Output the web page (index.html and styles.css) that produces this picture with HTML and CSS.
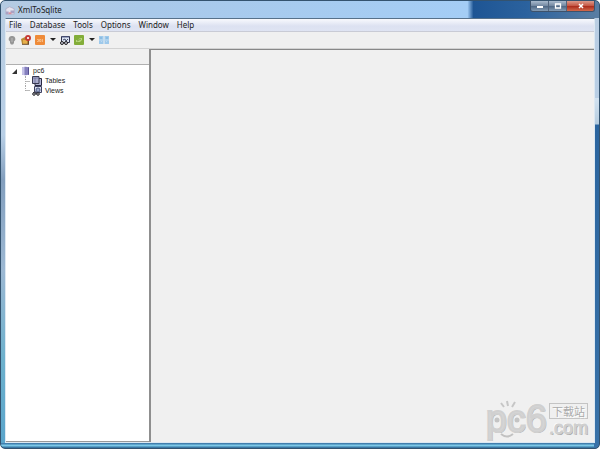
FILE: index.html
```html
<!DOCTYPE html>
<html lang="en">
<head>
<meta charset="utf-8">
<title>XmlToSqlite</title>
<link rel="stylesheet" href="styles.css">
</head>
<body>
<div class="window">
  <header class="titlebar">
    <svg class="app-icon" viewBox="0 0 12 12" aria-hidden="true"><path d="M1 4l4-2 5 2v6H1z" fill="#e6e4ef" stroke="#a9a5bd" stroke-width=".7"/><path d="M1 7h3v3H1zM6 6h4v3H6z" fill="#aaa2c4"/><path d="M4 8h3v2H4z" fill="#d98e9c"/></svg>
    <h1 class="title">XmlToSqlite</h1>
    <div class="controls">
      <button class="control" aria-label="Minimize"><svg viewBox="0 0 10 8"><path d="M2 4h6v2H2z" fill="#fff"/></svg></button>
      <button class="control" aria-label="Maximize"><svg viewBox="0 0 10 8"><path d="M2.500 2h5v4h-5z" fill="none" stroke="#fff" stroke-width="1.300"/></svg></button>
      <button class="control close" aria-label="Close"><svg viewBox="0 0 10 8"><path d="M3 2l4 4M7 2L3 6" stroke="#fff" stroke-width="1.500"/></svg></button>
    </div>
  </header>
  <div class="client">
    <nav class="menubar">
      <button>File</button><button>Database</button><button>Tools</button><button>Options</button><button>Window</button><button>Help</button>
    </nav>
    <div class="toolbar">
      <button class="tool" aria-label="Connect"><svg viewBox="0 0 10 10"><path d="M5 1a3 3 0 0 1 2 5.500V8L6 9.500H4L3 8V6.500A3 3 0 0 1 5 1z" fill="#969696"/><path d="M4 3h2v4H4z" fill="#a8a8a8"/></svg></button>
      <button class="tool" aria-label="Disconnect"><svg viewBox="0 0 10 10"><path d="M0 4l4-2 4 2v5H1z" fill="#b98a34"/><path d="M2 5h4v4H2z" fill="#e8b04b"/><path d="M1 9.300h7M7.500 5v4" stroke="#6b4927"/><circle cx="7" cy="3" r="3" fill="#c63a36"/><path d="M6 2l2 2M8 2L6 4" stroke="#fff" stroke-width=".8"/></svg></button>
      <button class="tool" aria-label="Run SQL"><svg viewBox="0 0 10 10"><rect width="10" height="10" rx="1" fill="#ef8b38"/><path d="M2 4.500h1.500v2H2M4.500 4.500h1.500v2H4.500zM7.500 4v3" fill="none" stroke="#f9c795" stroke-width=".8"/></svg></button>
      <button class="drop" aria-label="SQL options"><svg viewBox="0 0 6 4"><path d="M0 0h6L3 3z" fill="#222"/></svg></button>
      <button class="tool" aria-label="Find"><svg viewBox="0 0 10 10"><path d="M1.500 1.500h8v6h-8z" fill="#dde5f2" stroke="#303450"/><path d="M2 2h7" stroke="#5b6490"/><path d="M3 5l2-1 1 2 2-2" fill="none" stroke="#444b68"/><circle cx="2" cy="8" r="1.500" fill="#ccd" stroke="#222"/><circle cx="6" cy="8" r="1.500" fill="#ccd" stroke="#222"/></svg></button>
      <button class="tool" aria-label="Export"><svg viewBox="0 0 10 10"><rect width="10" height="10" rx="1" fill="#83ad39"/><path d="M2 7V5h2l2-2h2v2L6 7z" fill="#b7d67b"/><path d="M3 6l4-2" stroke="#658f29" stroke-width=".7"/></svg></button>
      <button class="drop" aria-label="Export options"><svg viewBox="0 0 6 4"><path d="M0 0h6L3 3z" fill="#222"/></svg></button>
      <button class="tool" aria-label="Grid"><svg viewBox="0 0 10 10"><path d="M0 1h4.500v8H0zM5.500 1H10v8H5.500z" fill="#9ec9eb"/><path d="M0 5h10M2 6.500h1M7 6.500h1" stroke="#bcdaf1"/><path d="M1 3h2M7 3h2" stroke="#78afd9"/></svg></button>
    </div>
    <div class="body">
      <aside class="sidebar">
        <div class="side-head"></div>
        <ul class="tree">
          <li class="root"><svg class="arrow" viewBox="0 0 5 5"><path d="M5 0v5H0z" fill="#333"/></svg><svg class="node" viewBox="0 0 10 10"><path d="M2 1.500q3.500-1.500 7 0v7q-3.500 1.500-7 0z" fill="#8580be"/><path d="M2 1.500q1-.7 2.500-.7v8.500q-1.500 0-2.500-.8z" fill="#c6c3e7"/><path d="M8 1v8l1-.5v-7z" fill="#555090"/></svg><span>pc6</span>
            <ul>
              <li><svg class="node" viewBox="0 0 10 10"><path d="M3 2.500h6.500v7H3z" fill="#b1b3d3" stroke="#282941"/><path d="M.5.5H7v7H.5z" fill="#a9abcc" stroke="#373950"/><path d="M1 2h6M3 2v5" stroke="#66698f" stroke-width=".7"/></svg><span>Tables</span></li>
              <li><svg class="node" viewBox="0 0 10 10"><path d="M2.500.5h7v6h-7z" fill="#d6dceb" stroke="#3e4060"/><circle cx="6" cy="4" r="2" fill="#9aa8cb" stroke="#4e5a82"/><path d="M1 7l2-2 1 3 2-1" fill="none" stroke="#43465f"/><circle cx="2" cy="8" r="1.300" fill="#ccd" stroke="#222"/><circle cx="6" cy="8" r="1.300" fill="#ccd" stroke="#222"/></svg><span>Views</span></li>
            </ul>
          </li>
        </ul>
      </aside>
      <main class="workspace"></main>
    </div>
  </div>
  <div class="watermark">
    <svg class="face" viewBox="0 0 40 40" aria-hidden="true"><path d="M15 3l3 4M21 1l1 5M29 2l-3 5" stroke="#c6c6c6" stroke-width="2"/><circle cx="11" cy="20" r="2.500" fill="#c4c4c4"/><circle cx="31" cy="20" r="2.500" fill="#c4c4c4"/><path d="M15 34q6 5 12 0" fill="none" stroke="#c2c2c2" stroke-width="2"/></svg>
    <span class="mark">pc6</span>
    <span class="mark-side"><span class="mark-tag" lang="zh-CN">下载站</span><span class="mark-com">.com</span></span>
  </div>
</div>
</body>
</html>
```
FILE: styles.css
```css
* { box-sizing: border-box; }
html, body { height: 100%; }
body {
  margin: 0;
  background: #fff;
  color: #222;
  font-family: "Noto Sans", "Open Sans", sans-serif;
  font-size: 8px;
  line-height: 12px;
}
button {
  border: 0;
  padding: 0;
  background: none;
  color: inherit;
  font: inherit;
}
svg { display: block; }
ul { margin: 0; padding: 0; list-style: none; }

.window {
  position: relative;
  display: flex;
  flex-direction: column;
  height: 100%;
  padding: 0 4px 5px;
  border: 1px solid #34536f;
  border-radius: 5px;
  background:
    linear-gradient(90deg, #b5cbe2 0, #a9c9ea 25%, #a4cdf5 78%, #1e5594 79%, #2b629e 88%, #5a7ea3 100%) top / 100% 17px no-repeat,
    linear-gradient(#d2e2f0 0, #b5ccdf 26px, #2b659f 27px, #3d76ab 100%) right 97px / 5px 100% no-repeat,
    linear-gradient(#326c9f, #7bc8e8 50%, #286292) bottom / 100% 5px no-repeat,
    linear-gradient(#b9cde2, #b8cfe6 30%, #829ebd 40%, #9cb8d3 60%, #6db1cd 80%, #59a4cb);
}
.titlebar {
  display: flex;
  flex: 0 0 17px;
  align-items: center;
}
.app-icon { width: 11px; height: 11px; margin-top: 2px; }
.title {
  flex: 1;
  margin: 0 0 0 2px;
  font: inherit;
}
.controls {
  display: flex;
  align-self: flex-start;
  border: 1px solid #3d526b;
  border-top: 0;
  border-radius: 0 0 3px 3px;
  overflow: hidden;
}
.control {
  display: grid;
  place-items: center;
  width: 18px;
  height: 10px;
  border-right: 1px solid #52657d;
  background: linear-gradient(#a9bacd, #70869f 50%, #4b6583 50%, #839bb3);
}
.control svg { width: 10px; height: 8px; }
.close {
  width: 27px;
  border: 0;
  background: linear-gradient(#db9a8b, #c45340 50%, #a9291a 50%, #d26a4c);
}

.client {
  display: flex;
  flex: 1;
  flex-direction: column;
  min-height: 0;
  border: 1px solid #dce8f2;
  border-top-color: #57718a;
  background: #f0f0f0;
}
.menubar {
  display: flex;
  flex: 0 0 13px;
  align-items: center;
  gap: 8px;
  padding-left: 3px;
  border-bottom: 1px solid #c9cbd5;
  background: linear-gradient(#f8f9fd, #dce1f1 60%, #dfe4f3);
}
.toolbar {
  display: flex;
  flex: 0 0 17px;
  align-items: center;
  gap: 4px;
  padding-left: 1px;
  border-bottom: 1px solid #d2d2d2;
}
.tool svg { width: 10px; height: 10px; }
.drop { padding-left: 1px; }
.drop svg { width: 6px; height: 4px; }
.body { display: flex; flex: 1; min-height: 0; }
.sidebar {
  display: flex;
  flex: 0 0 143px;
  flex-direction: column;
  border-bottom: 1px solid #999;
}
.side-head { flex: 0 0 16px; border-bottom: 1px solid #b0b0b0; }
.tree {
  flex: 1;
  background: #fff;
  font: 7px/10px "Liberation Sans", sans-serif;
  padding-top: 1px;
}
.root { display: grid; grid-template-columns: 5px 10px 1fr; column-gap: 3px; align-items: center; padding-left: 6px; }
.root > ul { grid-column: 2 / 4; margin-left: 5px; }
.root li { display: flex; align-items: center; gap: 3px; height: 10px; }
.root li::before {
  content: "";
  width: 4px;
  height: 10px;
  margin-right: -1px;
  border-left: 1px dotted #aaa;
  background: linear-gradient(#bbb, #bbb) center / 100% 1px no-repeat;
}
.root li:last-child::before { height: 5px; align-self: flex-start; background-position: bottom; }
.arrow { width: 5px; height: 5px; }
.node { width: 10px; height: 10px; }
.workspace {
  flex: 1;
  border-top: 1px solid #888;
  border-left: 2px solid #8f8f8f;
  background: #f0f0f0;
}

.watermark {
  position: absolute;
  right: 11px;
  bottom: 10px;
  display: flex;
  align-items: flex-start;
  gap: 2px;
  color: #d6d6d6;
  font-family: "Liberation Sans", sans-serif;
  text-shadow: -1px -1px #fff, 1px 1px #aaa;
}
.face { position: absolute; left: 0; top: 0; width: 40px; height: 40px; }
.mark { font-size: 38px; line-height: 38px; -webkit-text-stroke: 2px #d0d0d0; }
.mark-side { display: flex; flex-direction: column; align-items: flex-start; padding-top: 3px; }
.mark-tag {
  padding: 0 2px;
  border: 1px solid #c4c4c4;
  color: #aaa;
  font: 11px/14px "Noto Sans CJK SC", sans-serif;
  text-shadow: 1px 1px #fff;
}
.mark-com { font-size: 18px; line-height: 18px; -webkit-text-stroke: 1px #cecece; }
```
